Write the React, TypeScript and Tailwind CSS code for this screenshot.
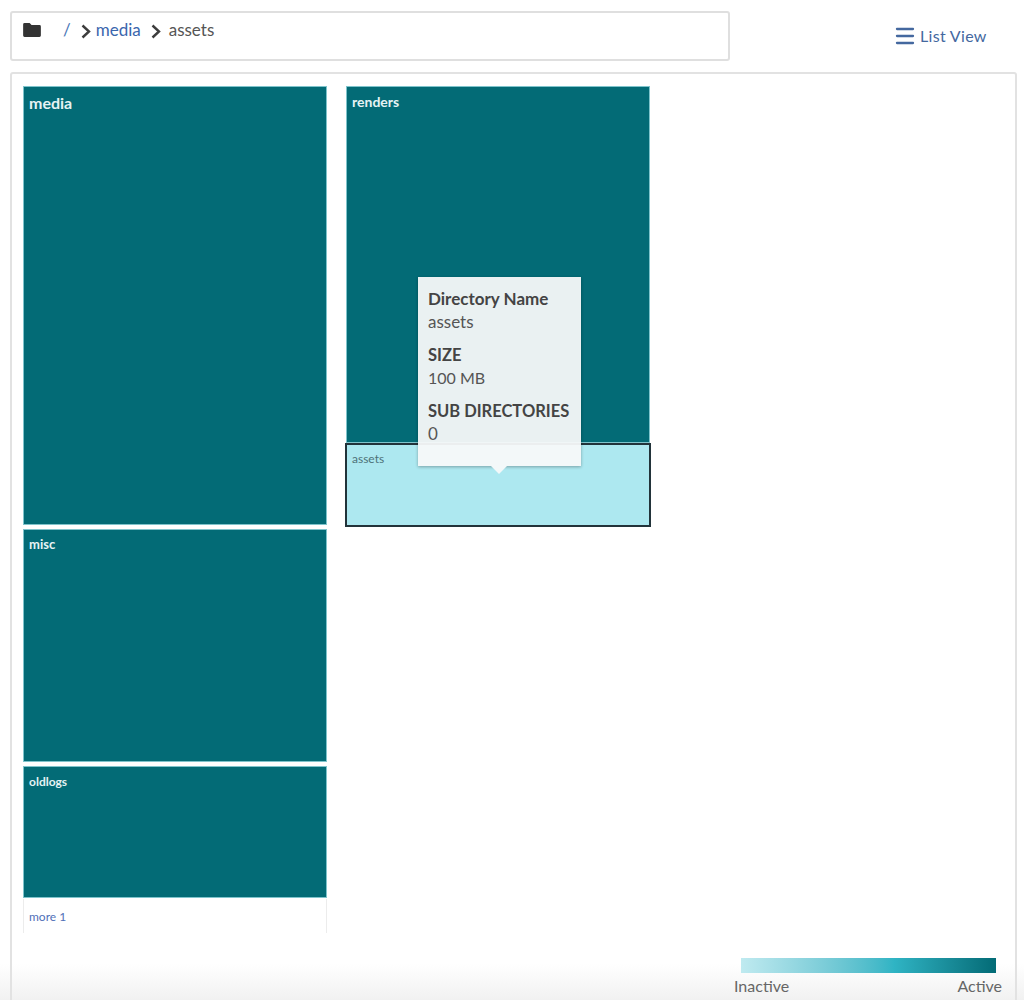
import { Menu } from "lucide-react";

const leftBlocks = [
  { name: "media", height: "h-[439px]", label: "text-[16px] leading-[20px] pt-[6px]" },
  { name: "misc", height: "h-[233px]", label: "text-[13px] leading-[18px] pt-[5px]" },
  { name: "oldlogs", height: "h-[132px]", label: "text-[12px] leading-[18px] pt-[6px]" },
];

function Chevron() {
  return (
    <svg width="10" height="15" viewBox="0 0 10 15" fill="none" className="shrink-0 mt-[5px]">
      <path d="M1.5 1.5 8 7.5 1.5 13.5" stroke="#3d3d3d" strokeWidth="2.4" />
    </svg>
  );
}

function Breadcrumb() {
  return (
    <div className="w-[720px] h-[50px] border-2 border-[#dfdfdf] rounded-[3px] bg-white flex items-start pl-[11px] pt-[6px] text-[17px] leading-[22px]">
      <svg width="18" height="14" viewBox="0 0 19 15" className="mt-[4px] shrink-0">
        <path d="M1.5 0H7l2 2.2h8.5A1.5 1.5 0 0 1 19 3.7v9.8a1.5 1.5 0 0 1-1.5 1.5h-16A1.5 1.5 0 0 1 0 13.5v-12A1.5 1.5 0 0 1 1.5 0Z" fill="#333333" />
      </svg>
      <span className="ml-[22px] text-[#4a77b8]">/</span>
      <span className="ml-[10px] flex"><Chevron /></span>
      <span className="ml-[5px] text-[#3a66ad]">media</span>
      <span className="ml-[10px] flex"><Chevron /></span>
      <span className="ml-[8px] text-[#555555]">assets</span>
    </div>
  );
}

function Tooltip() {
  return (
    <div className="absolute left-[72px] top-[191px] w-[163px] h-[189px] bg-[#f7f9f9]/95 shadow-[0_1px_3px_rgba(0,0,0,0.3)] px-[10px] pt-[10px] text-[17px] leading-[23px] text-[#555555]">
      <div className="font-bold text-[#444444]">Directory Name</div>
      <div>assets</div>
      <div className="mt-[11px] leading-[22px] text-[16.5px] font-bold text-[#444444]">SIZE</div>
      <div className="text-[16px]">100 MB</div>
      <div className="mt-[11px] leading-[22px] text-[16.5px] font-bold text-[#444444] whitespace-nowrap">SUB DIRECTORIES</div>
      <div>0</div>
      <div className="absolute left-[73px] bottom-[-8px] w-0 h-0 border-x-[8px] border-x-transparent border-t-[8px] border-t-[#f3f8f9]" />
    </div>
  );
}

export default function App() {
  return (
    <div
      className="relative w-[1024px] h-[1000px] overflow-hidden bg-white px-[10px] pt-[11px]"
      style={{ fontFamily: '"Lato", "Noto Sans", sans-serif' }}
    >
      {/* soft fade along the bottom edge, sits behind the legend */}
      <div className="absolute inset-x-0 bottom-0 h-[36px] bg-gradient-to-b from-transparent to-[#f1f1f1]" />

      <div className="relative flex items-start">
        <Breadcrumb />
        <button className="ml-[163px] mt-[13px] flex items-center gap-[3px] text-[16px] leading-[24px] text-[#44689f]">
          <Menu className="w-[24px] h-[24px]" strokeWidth={2.3} />
          <span className="tracking-[0.02em]">List View</span>
        </button>
      </div>

      <div className="relative mt-[11px] w-[1007px] h-[960px] border-2 border-[#e2e2e2] rounded-[3px] pl-[11px] pt-[12px] flex flex-col">
        <div className="flex items-start gap-[19px]">
          <div className="w-[304px] flex flex-col gap-[4px]">
            {leftBlocks.map((b) => (
              <div key={b.name} className={`${b.height} ${b.label} bg-[#036b76] border border-[#7fc4cc] px-[5px] font-bold text-[#e6f3f4]`}>
                {b.name}
              </div>
            ))}
            <div className="-mt-[3px] h-[34px] border-x border-[#ececec] px-[5px] pt-[10px] text-[12px] leading-[16px] text-[#4f6fb8]">
              more 1
            </div>
          </div>

          <div className="relative w-[304px] flex flex-col">
            <div className="h-[357px] bg-[#036b76] border border-[#7fc4cc] px-[5px] pt-[5px] text-[14px] leading-[20px] font-bold text-[#e6f3f4]">
              renders
            </div>
            <div className="-mx-[1px] h-[84px] bg-[#ade8f0] border-2 border-[#22333a] px-[5px] pt-[7px] text-[12px] leading-[14px] text-[#4d7278]">
              assets
            </div>
            <Tooltip />
          </div>
        </div>

        <div className="mt-[25px] ml-[711px] w-[268px]">
          <div className="ml-[7px] w-[255px] h-[15px] bg-gradient-to-r from-[#bfeaf0] via-[#2fb4c4] via-60% to-[#036b76]" />
          <div className="flex justify-between text-[16px] leading-[24px] mt-[1px] text-[#666666]">
            <span>Inactive</span>
            <span>Active</span>
          </div>
        </div>
      </div>
    </div>
  );
}
